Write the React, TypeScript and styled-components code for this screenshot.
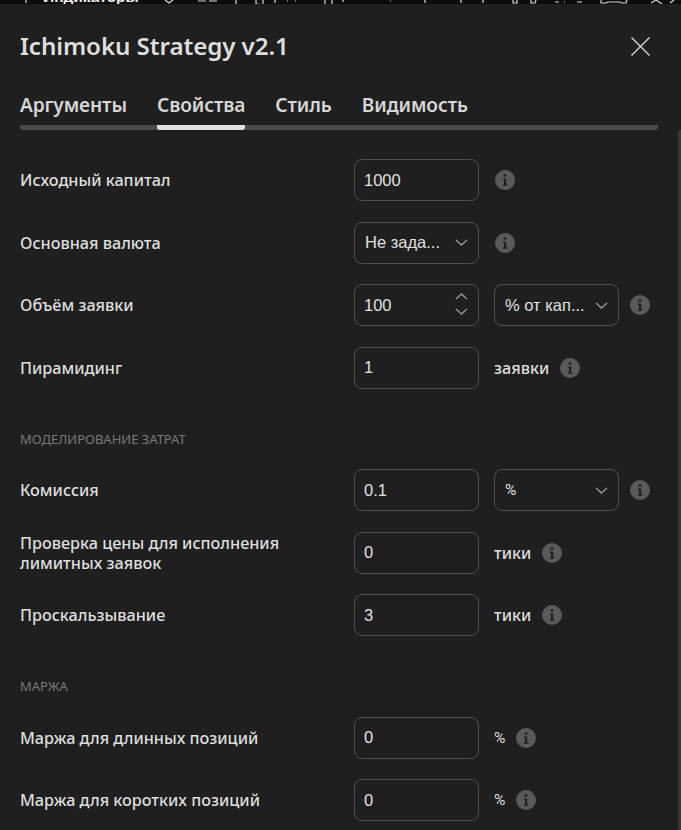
import React from "react";
import styled, { createGlobalStyle } from "styled-components";

const GlobalStyle = createGlobalStyle`
  html, body {
    margin: 0;
    padding: 0;
    height: 100%;
    background: #1f1f1f;
    overflow: hidden;
  }
  * {
    box-sizing: border-box;
  }
`;

const Page = styled.div`
  position: relative;
  width: 681px;
  height: 830px;
  overflow: hidden;
  background: #1f1f1f;
  color: #dcdcdc;
  font-family: "Noto Sans", "Liberation Sans", sans-serif;
`;

const ChartStrip = styled.div`
  height: 4px;
  background: #0b0b0b;
  overflow: hidden;
`;

const StripText = styled.span`
  position: absolute;
  left: 43px;
  top: -12px;
  color: #f2f2f2;
  font: 700 15.5px "Liberation Sans", sans-serif;
  clip-path: inset(0 0 calc(100% - 16px) 0);
`;

const StripMarks = styled.svg`
  position: absolute;
  left: 0;
  top: 0;
`;

const Header = styled.header`
  display: flex;
  align-items: center;
  justify-content: space-between;
  height: 82px;
  margin-bottom: 4px;
  padding: 0 30px 0 20px;
`;

const Title = styled.h1`
  margin: 0;
  font-size: 24.2px;
  font-weight: 600;
  letter-spacing: -0.1px;
  color: #dedede;
`;

const CloseIcon = styled.svg`
  display: block;
  width: 21px;
  height: 21px;
  margin-top: 2px;
`;

const Tabs = styled.nav`
  display: flex;
  gap: 30px;
  width: 638px;
  margin-left: 20px;
  height: 40px;
  border-bottom: 5px solid #4a4a4a;
  border-radius: 0 0 3px 3px;
`;

const Tab = styled.div<{ $active?: boolean }>`
  height: 40px;
  padding-top: 3px;
  font-size: 19.15px;
  font-weight: 600;
  line-height: 25px;
  letter-spacing: -0.1px;
  color: #d6d6d6;
  border-bottom: 5px solid ${(p) => (p.$active ? "#e2e2e2" : "transparent")};
  border-radius: 3px;
`;

const Form = styled.div`
  display: flex;
  flex-direction: column;
  gap: 20.6px;
  padding: 29.2px 0 0 20px;
`;

const Row = styled.div`
  display: flex;
  align-items: center;
  height: 42px;
`;

const Label = styled.div`
  width: 334px;
  flex: none;
  font-size: 16.2px;
  font-weight: 500;
  line-height: 20px;
  color: #dedede;
`;

const SectionTitle = styled.div`
  height: 20px;
  margin-top: 19px;
  font-size: 13px;
  line-height: 21px;
  color: #787878;
`;

const Field = styled.div`
  position: relative;
  display: flex;
  align-items: center;
  width: 125px;
  height: 42px;
  flex: none;
  padding: 0 9px;
  border: 1px solid #4f4f4f;
  border-radius: 8px;
  font: 400 16.5px "Liberation Sans", sans-serif;
  color: #e0e0e0;
`;

const SelectBox = styled(Field)`
  justify-content: space-between;
  margin: 0 11px 0 15px;
  padding: 0 10px;
`;

const FirstSelect = styled(SelectBox)`
  margin: 0;
`;

const Stepper = styled.div`
  position: absolute;
  right: 10px;
  top: 8px;
  display: flex;
  flex-direction: column;
  gap: 8px;
`;

const Chevron = styled.svg`
  display: block;
  width: 13px;
  height: 7px;
  flex: none;
`;

const Unit = styled.div`
  margin: 0 11px 0 15px;
  font-size: 16.2px;
  font-weight: 500;
  color: #dedede;
`;

const Percent = styled(Unit)`
  font: 400 15.5px Roboto, sans-serif;
`;

const PercentValue = styled.span`
  font: 400 15.5px Roboto, sans-serif;
`;

const HintIcon = styled.svg<{ $afterField?: boolean }>`
  display: block;
  width: 20px;
  height: 20px;
  flex: none;
  margin-left: ${(p) => (p.$afterField ? "16px" : "0")};
`;

const Scrollbar = styled.div`
  position: absolute;
  right: 0;
  top: 130px;
  bottom: 0;
  width: 3px;
  background: #383838;
  border-radius: 2px 0 0 0;
`;

const Hint = ({ afterField }: { afterField?: boolean }) => (
  <HintIcon $afterField={afterField} viewBox="0 0 20 20">
    <circle cx="10" cy="10" r="10" fill="#5a5a5a" />
    <circle cx="10" cy="5.6" r="1.4" fill="#1f1f1f" />
    <path d="M7.8 8.4h3.4v6h1.2v1.4H7.8v-1.4h1.2V9.8H7.8z" fill="#1f1f1f" />
  </HintIcon>
);

const ChevronDown = () => (
  <Chevron viewBox="0 0 13 7" fill="none" stroke="#9a9a9a" strokeWidth="1.3">
    <path d="M1 1l5.5 5 5.5-5" />
  </Chevron>
);

const ChevronUp = () => (
  <Chevron viewBox="0 0 13 7" fill="none" stroke="#9a9a9a" strokeWidth="1.3">
    <path d="M1 6l5.5-5 5.5 5" />
  </Chevron>
);

const App = () => {
  return (
    <Page>
      <GlobalStyle />
      <ChartStrip>
        <StripText>Индикаторы</StripText>
        <StripMarks width="681" height="4" fill="none" stroke="#d8d8d8" strokeWidth="1.2">
          <path d="M26 0v3M165 0l4 3 4-3M198 1h8M209 1h8M236 0v4M256 0v4h3M263 0v4M275 0v3M287 1h1M295 1h1M325 0v4M332 0v4" />
          <path d="M343 0v2M390 1h1M425 0v3M461 0v3M483 0v3M513 0v3h4v-3M531 0v3h4l1-3M555 2h4M564 2h1M577 2h5M601 0v3h5l2-1h12l2 1h4l1-3M651 3l5-3 6 4M670 3l4-3" />
        </StripMarks>
      </ChartStrip>

      <Header>
        <Title>Ichimoku Strategy v2.1</Title>
        <CloseIcon viewBox="0 0 21 21" fill="none" stroke="#d4d4d4" strokeWidth="1.4">
          <path d="M1.5 1.5l18 18M19.5 1.5l-18 18" />
        </CloseIcon>
      </Header>

      <Tabs>
        <Tab>Аргументы</Tab>
        <Tab $active>Свойства</Tab>
        <Tab>Стиль</Tab>
        <Tab>Видимость</Tab>
      </Tabs>

      <Form>
        <Row>
          <Label>Исходный капитал</Label>
          <Field>1000</Field>
          <Hint afterField />
        </Row>
        <Row>
          <Label>Основная валюта</Label>
          <FirstSelect>
            Не зада...
            <ChevronDown />
          </FirstSelect>
          <Hint afterField />
        </Row>
        <Row>
          <Label>Объём заявки</Label>
          <Field>
            100
            <Stepper>
              <ChevronUp />
              <ChevronDown />
            </Stepper>
          </Field>
          <SelectBox>
            % от кап...
            <ChevronDown />
          </SelectBox>
          <Hint />
        </Row>
        <Row>
          <Label>Пирамидинг</Label>
          <Field>1</Field>
          <Unit>заявки</Unit>
          <Hint />
        </Row>

        <SectionTitle>МОДЕЛИРОВАНИЕ ЗАТРАТ</SectionTitle>
        <Row>
          <Label>Комиссия</Label>
          <Field>0.1</Field>
          <SelectBox>
            <PercentValue>%</PercentValue>
            <ChevronDown />
          </SelectBox>
          <Hint />
        </Row>
        <Row>
          <Label>
            Проверка цены для исполнения
            <br />
            лимитных заявок
          </Label>
          <Field>0</Field>
          <Unit>тики</Unit>
          <Hint />
        </Row>
        <Row>
          <Label>Проскальзывание</Label>
          <Field>3</Field>
          <Unit>тики</Unit>
          <Hint />
        </Row>

        <SectionTitle>МАРЖА</SectionTitle>
        <Row>
          <Label>Маржа для длинных позиций</Label>
          <Field>0</Field>
          <Percent>%</Percent>
          <Hint />
        </Row>
        <Row>
          <Label>Маржа для коротких позиций</Label>
          <Field>0</Field>
          <Percent>%</Percent>
          <Hint />
        </Row>
      </Form>

      <Scrollbar />
    </Page>
  );
};

export default App;
